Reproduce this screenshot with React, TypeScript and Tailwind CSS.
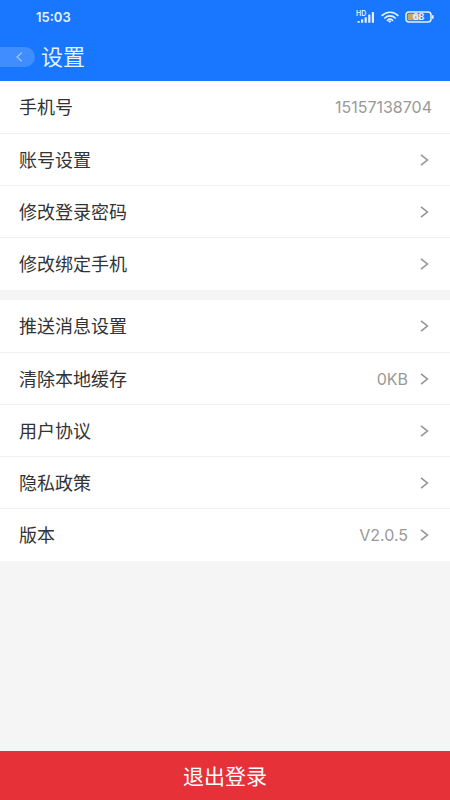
import * as React from "react";

type Row = {
  label: string;
  value?: string;
  arrow?: boolean;
};

const accountRows: Row[] = [
  { label: "手机号", value: "15157138704" },
  { label: "账号设置", arrow: true },
  { label: "修改登录密码", arrow: true },
  { label: "修改绑定手机", arrow: true },
];

const appRows: Row[] = [
  { label: "推送消息设置", arrow: true },
  { label: "清除本地缓存", value: "0KB", arrow: true },
  { label: "用户协议", arrow: true },
  { label: "隐私政策", arrow: true },
  { label: "版本", value: "V2.0.5", arrow: true },
];

function StatusBar() {
  return (
    <div className="flex h-8 items-center justify-between pt-px pl-9 pr-4 text-[#e6f1ff]">
      <span className="text-[13px] leading-4 font-semibold">15:03</span>
      <div className="flex items-center gap-1.5">
        <svg width="19" height="14" viewBox="0 0 19 14" fill="currentColor" aria-label="HD">
          <text x="0" y="6" fontSize="7" fontWeight="600">
            HD
          </text>
          <rect x="1.5" y="11" width="2.2" height="1.8" rx="0.5" />
          <rect x="5" y="9.2" width="2.2" height="3.6" rx="0.5" />
          <rect x="8.6" y="7.2" width="2.2" height="5.6" rx="0.5" />
          <rect x="12.2" y="4.6" width="2.2" height="8.2" rx="0.5" />
          <rect x="15.8" y="2" width="2.2" height="10.8" rx="0.5" />
        </svg>
        <svg
          width="18"
          height="12"
          viewBox="0 0 18 12"
          fill="none"
          stroke="currentColor"
          strokeWidth="1.7"
          strokeLinecap="round"
          aria-hidden="true"
        >
          <path d="M1.2 4.4a11.2 11.2 0 0 1 15.6 0" />
          <path d="M3.8 7a7.5 7.5 0 0 1 10.4 0" />
          <path d="M6.4 9.3a3.9 3.9 0 0 1 5.2 0" />
          <path d="M8 10.1h2L9 11.2z" fill="currentColor" strokeWidth="1" />
        </svg>
        <svg width="29" height="12" viewBox="0 0 29 12" fill="currentColor" aria-label="68">
          <rect x="1" y="1" width="25" height="10" rx="3" fill="none" stroke="currentColor" strokeWidth="1.5" />
          <path d="M4 2.7h11v6.6H4A1.3 1.3 0 0 1 2.7 8V4A1.3 1.3 0 0 1 4 2.7z" fill="#c9a566" />
          <rect x="27" y="4" width="1.6" height="4" rx="0.7" />
          <text x="13.5" y="9.3" fontSize="9" fontWeight="700" textAnchor="middle">
            68
          </text>
        </svg>
      </div>
    </div>
  );
}

function Chevron() {
  return (
    <svg
      className="ml-3 mr-[3px]"
      width="9"
      height="12"
      viewBox="0 0 9 12"
      fill="none"
      stroke="#949494"
      strokeWidth="1.6"
      aria-hidden="true"
    >
      <path d="M1 0.8L7.4 6 1 11.2" />
    </svg>
  );
}

function SettingRow({ label, value, arrow }: Row) {
  const content = (
    <>
      <span className="pt-0.5 text-lg text-[#333]">{label}</span>
      <span className="flex items-center">
        {value && <span className="text-base text-[#999]">{value}</span>}
        {arrow && <Chevron />}
      </span>
    </>
  );
  const rowClass = "flex h-full w-full items-center justify-between pl-[19px] pr-[18px]";

  return (
    <li className="h-[52px] border-b border-[#f1f1f1] first:h-[53px] last:border-b-0">
      {arrow ? (
        <button type="button" className={rowClass}>
          {content}
        </button>
      ) : (
        <div className={rowClass}>{content}</div>
      )}
    </li>
  );
}

function SettingGroup({ rows }: { rows: Row[] }) {
  return (
    <ul className="bg-white">
      {rows.map((row) => (
        <SettingRow key={row.label} {...row} />
      ))}
    </ul>
  );
}

export default function App() {
  return (
    <div className="flex min-h-screen flex-col bg-[#f5f5f5] font-[Inter,'Noto_Sans_CJK_SC',sans-serif]">
      <header className="bg-[#1976fe] pb-2">
        <StatusBar />
        <div className="flex h-[41px] items-center pt-2 text-[#e6f1ff]">
          <button
            type="button"
            aria-label="返回"
            className="flex h-5 w-[35px] items-center justify-center rounded-r-full bg-[#3f8dfe] pl-1"
          >
            <svg width="7" height="10" viewBox="0 0 7 10" fill="none" stroke="#a3c9ff" strokeWidth="1.2">
              <path d="M5.8 0.7L1 5l4.8 4.3" />
            </svg>
          </button>
          <h1 className="ml-1.5 pt-px text-[22px] leading-8">设置</h1>
        </div>
      </header>

      <main className="flex flex-1 flex-col gap-2.5">
        <SettingGroup rows={accountRows} />
        <SettingGroup rows={appRows} />
      </main>

      <button type="button" className="h-[49px] w-full bg-[#e63139] pt-0.5 text-[21px] text-white">
        退出登录
      </button>
    </div>
  );
}
